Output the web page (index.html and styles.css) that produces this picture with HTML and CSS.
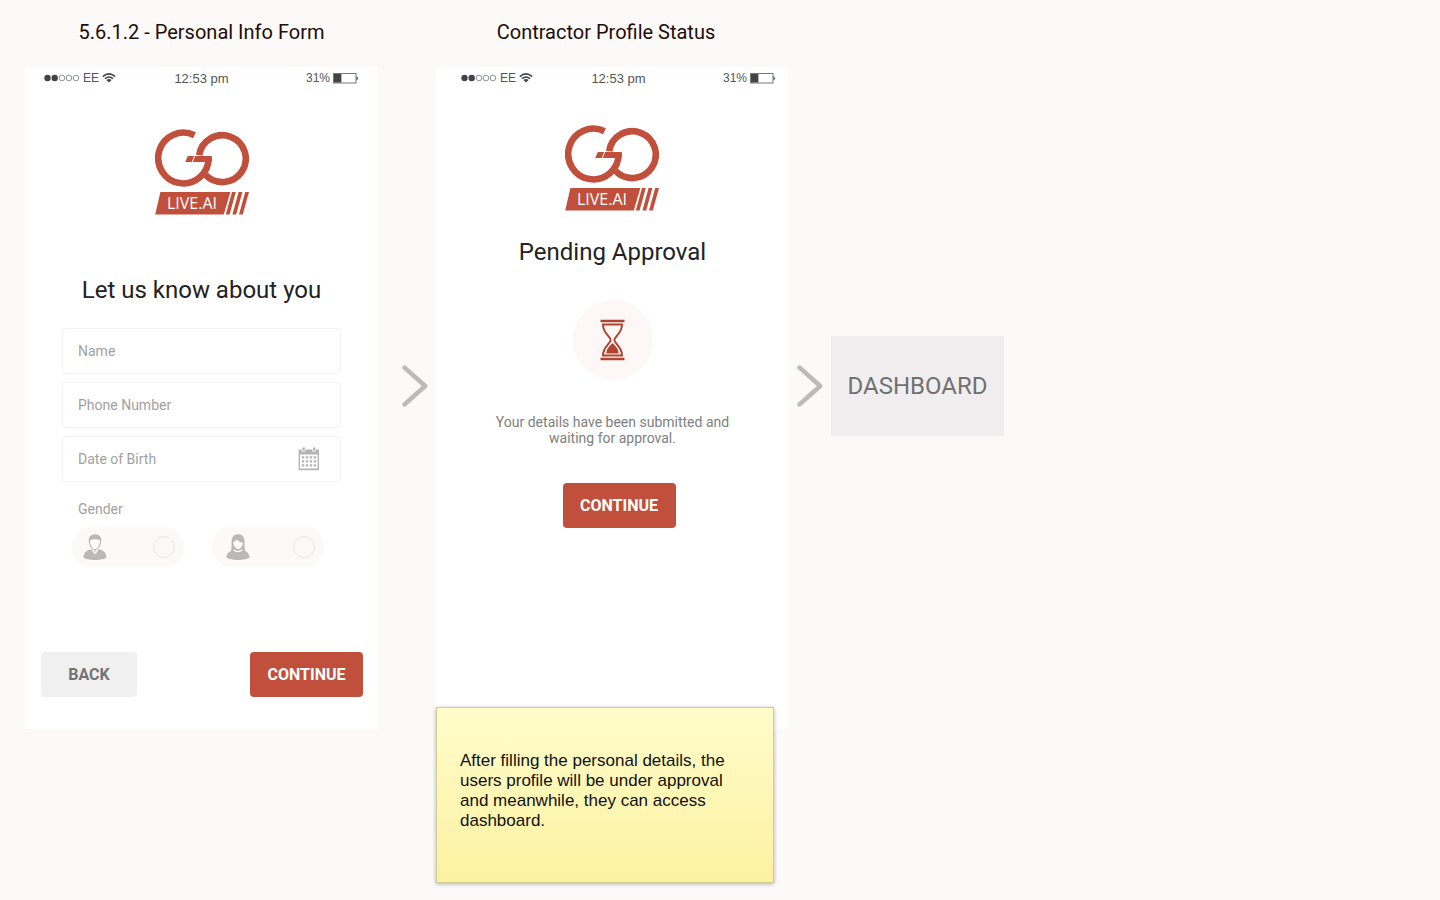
FILE: index.html
```html
<!DOCTYPE html>
<html lang="en">
<head>
<meta charset="utf-8">
<meta name="viewport" content="width=device-width, initial-scale=1">
<title>Contractor onboarding flow</title>
<link rel="stylesheet" href="styles.css">
</head>
<body>
<svg class="sprite" aria-hidden="true">
  <symbol id="logo" viewBox="0 0 94 87">
    <path d="M44.2 27.2A23.4 23.4 0 1 1 50.4 46.8" fill="none" stroke="#c0503c" stroke-width="6.6"/>
    <path d="M53.6 30V31A25.2 25.4 0 0 1 45 47.4" fill="none" stroke="#fff" stroke-width="8"/>
    <path d="M39.5 7.2A25.2 25.4 0 1 0 53.6 30" fill="none" stroke="#c0503c" stroke-width="6.6"/>
    <path d="M40.2 28H56.9L56.6 34H37.7Z M32.8 28H39.2L36.7 34H30.2Z" fill="#c0503c"/>
    <path d="M5.4 64H75.4L68.8 86.6H.2Z M77 64H80.8L74.6 86.6H70.8Z M83.6 64H87.4L81.2 86.6H77.4Z M90.2 64H94L87.8 86.6H84Z" fill="#c0503c"/>
  </symbol>
  <symbol id="signal" viewBox="0 0 36 8">
    <circle cx="3.5" cy="4" r="3.2" fill="#444"/><circle cx="10.7" cy="4" r="3.2" fill="#444"/>
    <g fill="none" stroke="#777" stroke-width=".8"><circle cx="18" cy="4" r="2.8"/><circle cx="25" cy="4" r="2.8"/><circle cx="32" cy="4" r="2.8"/></g>
  </symbol>
  <symbol id="wifi" viewBox="0 0 14 10">
    <g fill="none" stroke="#444" stroke-width="1.5"><path d="M.8 3.6Q7-1.8 13.2 3.6"/><path d="M2.9 5.8Q7 2.2 11.1 5.8"/></g>
    <path d="M4.4 7Q7 4.8 9.6 7L7 9.6Z" fill="#444"/>
  </symbol>
  <symbol id="battery" viewBox="0 0 26 11">
    <rect x=".5" y=".5" width="22.5" height="9.5" fill="#fff" stroke="#777"/>
    <rect x="1" y="1" width="7.4" height="8.5" fill="#444"/>
    <path d="M23.5 3Q26.4 5.2 23.5 7.6Z" fill="#555"/>
  </symbol>
  <symbol id="chevron" viewBox="0 0 26 42">
    <path d="M2.6 2.6L23.2 21L2.6 39.4" fill="none" stroke="#bcbbba" stroke-width="4.6" stroke-linecap="round" stroke-linejoin="round"/>
  </symbol>
</svg>

<main class="board">
  <h2 class="title title-form">5.6.1.2 - Personal Info Form</h2>
  <h2 class="title title-status">Contractor Profile Status</h2>

  <section class="screen screen-form">
    <div class="statusbar">
      <span class="carrier"><svg class="i-signal"><use href="#signal"/></svg>EE<svg class="i-wifi"><use href="#wifi"/></svg></span>
      <span class="clock">12:53 pm</span>
      <span class="power">31%<svg class="i-battery"><use href="#battery"/></svg></span>
    </div>
    <svg class="logo" viewBox="0 0 94 87" role="img" aria-label="GO LIVE.AI"><use href="#logo"/><text x="12" y="81" class="logo-text">LIVE.AI</text></svg>
    <h1 class="heading">Let us know about you</h1>
    <form class="form">
      <div class="fields">
        <input class="field" type="text" placeholder="Name" aria-label="Name">
        <input class="field" type="tel" placeholder="Phone Number" aria-label="Phone Number">
        <div class="date">
          <input class="field" type="text" placeholder="Date of Birth" aria-label="Date of Birth">
          <svg class="i-calendar" viewBox="0 0 22 24" aria-hidden="true">
            <path fill="#b5b4b4" fill-rule="evenodd" d="M.6 2.6H3.6V4.4H7.4V2.6H14.4V4.4H17.8V2.6H21V23.2H.6ZM2 7.4V21.6H19.6V7.4Z"/>
            <path fill="#b5b4b4" d="M4.4 .6H6.8V3.6H4.4ZM15 .6H17.4V3.6H15Z"/>
            <path stroke="#b5b4b4" stroke-width="2.4" stroke-dasharray="2.4 1.6" d="M3.8 10.4H18.2M3.8 14.4H18.2M3.8 18.4H18.2"/>
          </svg>
        </div>
      </div>
      <fieldset class="gender">
        <legend class="gender-label">Gender</legend>
        <div class="options">
          <label class="option">
            <svg class="i-person" viewBox="0 0 24 26" aria-hidden="true">
              <path fill="#fff" d="M6.6 6H17.5L16.6 12L13.8 15.6H10.4L7.4 12Z"/>
              <path fill="#b9b9b9" fill-rule="evenodd" d="M6 8.2C5 3 8 .3 12.2.3S19 3.2 18 8.2C17.6 12.5 15 16.2 12 16.2S6.5 12.5 6 8.2ZM7.2 6.2C7 11.5 9.5 15.1 12 15.1S17 11.5 16.8 6.2C14 4.8 10 4.8 7.2 6.2Z"/>
              <path fill="#b9b9b9" d="M8.3 15.3L11.4 20.5L12 18L12.6 20.5L15.7 15.3C20 16.3 22.6 17.4 23.6 23.2C20 26.8 4 26.8.4 23.2C1.4 17.4 4 16.3 8.3 15.3ZM11 16.4H13L12.5 17.8H11.5Z"/>
            </svg>
            <input class="radio" type="radio" name="gender" aria-label="Male">
          </label>
          <label class="option option-female">
            <svg class="i-person" viewBox="0 0 24 26" aria-hidden="true">
              <path fill="#b9b9b9" d="M5 16.8C6.2 12 5.2 9 5.8 5.5C6.4 2 8.6.3 12 .3S17.8 2 18.3 5.5C18.9 9 18 12 19.2 16.8L12 18.6Z"/>
              <path fill="#fff" d="M7.3 8C9.2 7.4 10 6.6 10.6 5.4C12.3 7.3 15 8.4 17 8.8C16.6 12 14.6 15 12.2 15S7.4 12 7.3 8Z"/>
              <path fill="#b9b9b9" d="M7.8 16.2Q12 20.4 16.2 16.2C20.5 17 22.8 18.4 23.6 23.2C20 26.8 4 26.8.4 23.2C1.2 18.4 3.6 17 7.8 16.2Z"/>
              <path fill="none" stroke="#fff" stroke-width="1.2" d="M7.6 15.8Q12 19.6 16.4 15.8"/>
            </svg>
            <input class="radio" type="radio" name="gender" aria-label="Female">
          </label>
        </div>
      </fieldset>
      <div class="actions">
        <button class="btn btn-back" type="button">BACK</button>
        <button class="btn" type="submit">CONTINUE</button>
      </div>
    </form>
  </section>

  <svg class="chevron"><use href="#chevron"/></svg>

  <section class="screen screen-status">
    <div class="statusbar">
      <span class="carrier"><svg class="i-signal"><use href="#signal"/></svg>EE<svg class="i-wifi"><use href="#wifi"/></svg></span>
      <span class="clock">12:53 pm</span>
      <span class="power">31%<svg class="i-battery"><use href="#battery"/></svg></span>
    </div>
    <svg class="logo" viewBox="0 0 94 87" role="img" aria-label="GO LIVE.AI"><use href="#logo"/><text x="12" y="81" class="logo-text">LIVE.AI</text></svg>
    <h1 class="heading">Pending Approval</h1>
    <div class="badge">
      <svg class="i-hourglass" viewBox="0 0 25 42" aria-hidden="true">
        <path fill="#b04431" d="M.5.8H24.5V3.2H.5ZM.5 38.8H24.5V41.2H.5Z"/>
        <path fill="none" stroke="#b04431" stroke-width="2" d="M3 5.6H22C22.3 14 14.4 17.5 14.4 21S22.3 28 22 36.6H3C2.7 28 10.6 24.5 10.6 21S2.7 14 3 5.6Z"/>
        <path fill="#b04431" d="M6.4 34.6C6.6 29 9 28 12.5 24C16 28 18.4 29 18.6 34.6Z"/>
      </svg>
    </div>
    <p class="message">Your details have been submitted and waiting for approval.</p>
    <button class="btn" type="button">CONTINUE</button>
  </section>

  <svg class="chevron"><use href="#chevron"/></svg>

  <div class="next"><div class="node">DASHBOARD</div></div>

  <aside class="note">After filling the personal details, the users profile will be under approval and meanwhile, they can access dashboard.</aside>
</main>
</body>
</html>
```

FILE: styles.css
```css
* { box-sizing: border-box; }

body {
  margin: 0;
  min-height: 100vh;
  background: #fcfaf9;
  font-family: Roboto, "Liberation Sans", sans-serif;
  color: #222;
}

.sprite { position: absolute; width: 0; height: 0; }

.logo-text { font-family: "Open Sans", "Noto Sans", sans-serif; font-size: 16px; fill: #fff; }

.board {
  display: grid;
  grid-template-columns: minmax(280px, 353px) 58px minmax(280px, 353px) 42px minmax(150px, 173px);
  padding: 0 16px 16px 25px;
}

.title {
  margin: 0;
  padding: 18px 0 21px;
  font-size: 20px;
  font-weight: 400;
  line-height: 28px;
  text-align: center;
  color: #230c08;
}
.title-form { grid-column: 1; }
.title-status { grid-column: 3; margin-right: 13px; }

.screen {
  grid-row: 2;
  display: flex;
  flex-direction: column;
  align-items: center;
  min-height: 662px;
  background: #fff;
}
.screen-form { grid-column: 1; }
.screen-status { grid-column: 3; }

.statusbar {
  display: grid;
  grid-template-columns: 1fr auto 1fr;
  align-items: center;
  align-self: stretch;
  height: 22px;
  padding: 0 19px;
  font-family: "Liberation Sans", Arial, sans-serif;
  font-size: 12px;
  color: #555;
}
.screen-status .statusbar { padding: 0 13px 0 25px; }
.carrier, .power { display: flex; align-items: center; gap: 3px; }
.carrier svg, .power svg { flex: none; }
.power { justify-content: flex-end; }
.clock { font-size: 13px; }
.i-signal { width: 36px; height: 8px; }
.i-wifi { width: 14px; height: 10px; }
.i-battery { width: 26px; height: 11px; }

.logo { width: 94px; height: 87px; margin: 39px 0 0; }
.screen-status .logo { margin: 35px 2px 0 0; }

.heading {
  margin: 59px 0 0;
  font-size: 24px;
  font-weight: 400;
  line-height: 32px;
}
.screen-status .heading { margin-top: 25px; }

.form {
  display: flex;
  flex: 1;
  flex-direction: column;
  align-self: stretch;
  padding: 22px 15px 32px;
}
.fields { display: grid; gap: 8px; padding: 0 22px; }
.field {
  width: 100%;
  height: 46px;
  padding: 0 15px;
  border: 1px solid #f3f3f3;
  border-radius: 4px;
  background: #fff;
  font: 14px Roboto, "Liberation Sans", sans-serif;
  color: #444;
}
.field::placeholder { color: #a2a1a1; opacity: 1; }
.date { position: relative; }
.i-calendar { position: absolute; top: 11px; right: 21px; width: 22px; height: 24px; }

.gender { margin: 0; padding: 0 39px 0 32px; border: 0; }
.gender-label { padding: 17px 0 8px 6px; font-size: 14px; line-height: 20px; color: #a2a1a1; }
.options { display: grid; grid-template-columns: 1fr 1fr; gap: 28px; }
.option {
  display: flex;
  align-items: center;
  justify-content: space-between;
  height: 40px;
  padding: 0 9px 0 11px;
  border-radius: 20px;
  background: #fcfaf9;
}
.option-female { padding-left: 14px; }
.i-person { width: 24px; height: 26px; }
.radio {
  appearance: none;
  width: 22px;
  height: 22px;
  margin: 0;
  border: 1px solid #e9e8e7;
  border-radius: 50%;
}
.radio:checked { border: 6px solid #c0503c; }

.actions { display: flex; justify-content: space-between; margin-top: auto; padding-left: 1px; }
.btn {
  min-width: 113px;
  height: 45px;
  padding: 0 16px;
  border: 0;
  border-radius: 4px;
  background: #c0503c;
  font: 700 16px Roboto, "Liberation Sans", sans-serif;
  color: #fff;
}
.btn-back { min-width: 96px; background: #f0f0f0; color: #747474; }
.screen-status .btn { margin-left: 13px; }

.badge {
  display: flex;
  align-items: center;
  justify-content: center;
  width: 80px;
  height: 80px;
  margin-top: 32px;
  border-radius: 50%;
  background: #fdf8f7;
}
.i-hourglass { width: 25px; height: 42px; }

.message {
  max-width: 260px;
  margin: 34px 0 37px;
  font-size: 14px;
  line-height: 16px;
  text-align: center;
  color: #808080;
}

.chevron {
  grid-row: 2;
  align-self: center;
  justify-self: end;
  width: 34px;
  height: 66px;
  padding: 0 8px 24px 0;
}

.next { display: grid; grid-row: 2; align-items: center; padding-bottom: 24px; }
.node {
  padding: 34px 0;
  background: #f0eeef;
  font-size: 24px;
  line-height: 32px;
  text-align: center;
  color: #727171;
}

.note {
  grid-column: 3;
  z-index: 1;
  min-height: 176px;
  margin: -22px 15px 0 0;
  padding: 43px 23px;
  border: 1px solid #d2cc96;
  background: linear-gradient(#fffcc9, #fcf2a2);
  box-shadow: 0 1px 4px rgba(0, 0, 0, .3);
  font-family: "Liberation Sans", Arial, sans-serif;
  font-size: 17px;
  line-height: 20px;
  color: #111;
}
```
